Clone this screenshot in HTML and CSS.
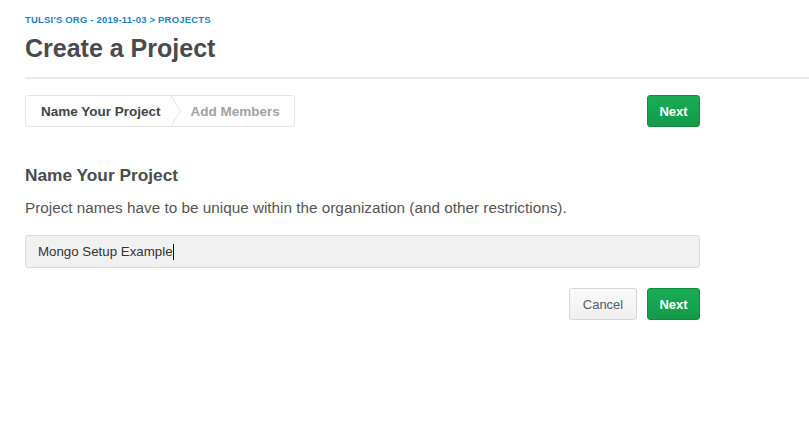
FILE: index.html
```html
<!DOCTYPE html>
<html>
<head>
<meta charset="utf-8">
<link rel="stylesheet" href="styles.css">
</head>
<body>
<div class="page">
  <div class="breadcrumb">TULSI'S ORG - 2019-11-03 &gt; PROJECTS</div>
  <h1 class="title">Create a Project</h1>
  <div class="rule"></div>
  <div class="content">
    <div class="toolbar">
      <div class="steps">
        <div class="step step-active">Name Your Project</div>
        <svg class="chev" width="12" height="32" viewBox="0 0 12 32"><path d="M0.5 0 L10.5 16 L0.5 32" fill="none" stroke="#e3e3e3" stroke-width="1"/></svg>
        <div class="step step-todo">Add Members</div>
      </div>
      <button class="btn btn-primary">Next</button>
    </div>
    <h2 class="section-title">Name Your Project</h2>
    <p class="desc">Project names have to be unique within the organization (and other restrictions).</p>
    <div class="input"><span>Mongo Setup Example</span><span class="caret"></span></div>
    <div class="actions">
      <button class="btn btn-default">Cancel</button>
      <button class="btn btn-primary">Next</button>
    </div>
  </div>
</div>
</body>
</html>
```

FILE: styles.css
```css
html, body {
  margin: 0;
  padding: 0;
  background: #fff;
}
body {
  font-family: "Liberation Sans", Arial, sans-serif;
}
.page {
  padding: 13px 0 0 25px;
}
.breadcrumb {
  font-size: 9.5px;
  font-weight: bold;
  color: #1a7fc4;
  letter-spacing: 0.2px;
  line-height: 14px;
}
.title {
  margin: 6px 0 0;
  font-size: 25px;
  font-weight: bold;
  color: #494b4d;
  line-height: 31px;
}
.rule {
  margin-top: 13px;
  height: 2px;
  background: #e7eaeb;
}
.content {
  width: 675px;
  padding-top: 16px;
}
.toolbar {
  display: flex;
  justify-content: space-between;
  align-items: center;
}
.steps {
  display: flex;
  align-items: center;
  height: 32px;
  box-sizing: border-box;
  border: 1px solid #e6e6e6;
  border-radius: 3px;
  padding-left: 15px;
  width: 270px;
}
.step {
  font-size: 13.5px;
  font-weight: bold;
}
.step-active {
  color: #3d4549;
  margin-right: 9px;
}
.step-todo {
  color: #a3a3a3;
  margin-left: 9px;
}
.chev {
  display: block;
  margin-top: -1px;
  margin-bottom: -1px;
}
.btn {
  font-family: "Liberation Sans", Arial, sans-serif;
  font-size: 13px;
  height: 32px;
  border-radius: 3px;
  padding: 0 12px;
  cursor: pointer;
}
.btn-primary {
  width: 53px;
  padding: 0;
  color: #fff;
  font-weight: bold;
  background: linear-gradient(#18ad55, #139a49);
  border: 1px solid #0f8c40;
}
.btn-default {
  width: 68px;
  padding: 0;
  color: #5b5b5b;
  background: linear-gradient(#fafafa, #f0f0f0);
  border: 1px solid #d5d5d5;
}
.section-title {
  margin: 37px 0 0;
  font-size: 17.3px;
  font-weight: bold;
  color: #4a4c4e;
  line-height: 22px;
}
.desc {
  margin: 12px 0 0;
  font-size: 15.3px;
  color: #555;
  line-height: 20px;
}
.input {
  margin-top: 17px;
  height: 33px;
  box-sizing: border-box;
  border: 1px solid #dcdcdc;
  border-radius: 3px;
  background: #f1f1f1;
  padding-left: 12px;
  display: flex;
  align-items: center;
  font-size: 13.3px;
  color: #333;
}
.caret {
  display: inline-block;
  width: 1px;
  height: 16px;
  background: #000;
}
.actions {
  margin-top: 20px;
  display: flex;
  justify-content: flex-end;
  gap: 10px;
}
```
